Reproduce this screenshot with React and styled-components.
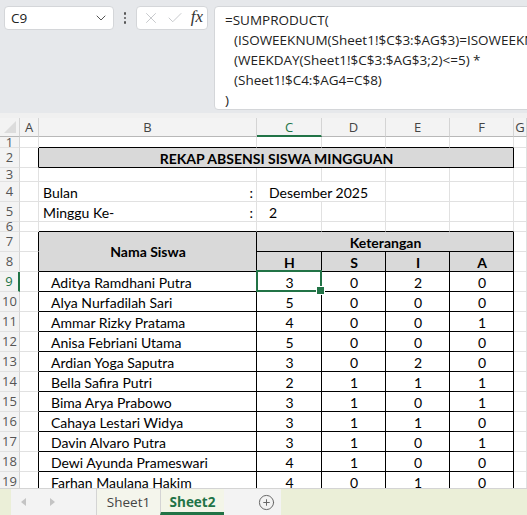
import React from 'react';
import styled, { createGlobalStyle } from 'styled-components';
import { ChevronDown, X, Check, CirclePlus } from 'lucide-react';

const GlobalStyle = createGlobalStyle`
  html, body { margin: 0; padding: 0; overflow: hidden; background: #fff; }
  * { box-sizing: border-box; }
`;

const Page = styled.div`
  width: 527px;
  height: 515px;
  display: flex;
  flex-direction: column;
  overflow: hidden;
`;

const TopBar = styled.div`
  height: 113px;
  flex-shrink: 0;
  background: #e6e8eb;
  display: flex;
  align-items: flex-start;
  padding: 6px 0 0 4px;
  overflow: hidden;
  font-family: "Open Sans", "Noto Sans", sans-serif;
  & > * { flex-shrink: 0; }
`;

const NameBox = styled.div`
  width: 110px;
  height: 24px;
  background: #fff;
  border: 1px solid #d4d6d9;
  border-radius: 4px;
  display: flex;
  align-items: center;
  justify-content: space-between;
  padding: 0 4px 0 6px;
  font-size: 13.5px;
  color: #222;
`;

const Dots = styled.div`
  width: 22px;
  height: 24px;
  display: flex;
  flex-direction: column;
  align-items: center;
  justify-content: center;
  gap: 2px;
  span {
    width: 2.5px;
    height: 2.5px;
    background: #555;
    border-radius: 50%;
  }
`;

const FxBox = styled.div`
  width: 72px;
  height: 24px;
  background: #fff;
  border: 1px solid #d4d6d9;
  border-radius: 4px;
  display: flex;
  align-items: center;
  justify-content: space-between;
  padding: 0 4px 0 5px;
  color: #c2c4c7;
`;

const Fx = styled.span`
  font-family: "Liberation Serif", serif;
  font-style: italic;
  font-size: 17px;
  color: #333;
  padding-bottom: 2px;
`;

const FormulaBox = styled.div`
  margin-left: 6px;
  width: 330px;
  height: 104px;
  background: #fff;
  border: 1px solid #d4d6d9;
  border-radius: 4px;
  padding: 3px 0 0 10px;
  font-size: 13.5px;
  line-height: 20px;
  color: #222;
  white-space: nowrap;
  overflow: hidden;
`;

const FLine = styled.div`
  padding-left: ${p => (p.$indent ? 9 : 0)}px;
`;

const Strip = styled.div`
  height: 5px;
  flex-shrink: 0;
  background: #f0f0f0;
`;

const COLS = '20px 19px 218px 65px 64px 64px 64px 1fr';
const ROWS = '19px 11px 20px 14px 20px 20px 10px repeat(13, 20px)';

const Sheet = styled.div`
  height: 370px;
  flex-shrink: 0;
  overflow: hidden;
  display: grid;
  grid-template-columns: ${COLS};
  grid-template-rows: ${ROWS};
  background: #fff;
  font-family: Lato, "Liberation Sans", sans-serif;
  font-size: 14px;
  color: #000;
`;

const Corner = styled.div`
  background: #f3f3f3;
  border-right: 1px solid #d4d4d4;
  border-bottom: 1px solid #b8b8b8;
  position: relative;
  &::after {
    content: '';
    position: absolute;
    right: 3px;
    bottom: 3px;
    width: 0;
    height: 0;
    border-left: 12px solid transparent;
    border-bottom: 12px solid #dcdcdc;
  }
`;

const ColHead = styled.div`
  background: #f3f3f3;
  border-right: 1px solid #d4d4d4;
  border-bottom: ${p => (p.$active ? '2px solid #217346' : '1px solid #b8b8b8')};
  display: flex;
  align-items: center;
  justify-content: center;
  font-family: "Open Sans", "Noto Sans", sans-serif;
  font-size: 13px;
  color: ${p => (p.$active ? '#217346' : '#444')};
`;

const RowHead = styled.div`
  background: #f3f3f3;
  border-right: ${p => (p.$active ? '2px solid #217346' : '1px solid #d4d4d4')};
  border-bottom: 1px solid #e1e1e1;
  display: flex;
  align-items: center;
  justify-content: center;
  overflow: hidden;
  font-family: "Open Sans", "Noto Sans", sans-serif;
  font-size: 13px;
  line-height: 1;
  color: ${p => (p.$active ? '#217346' : '#555')};
`;

const Cell = styled.div`
  position: relative;
  grid-column: span ${p => p.$cols || 1};
  grid-row: span ${p => p.$rows || 1};
  border-right: 1px solid ${p => (p.$r ? '#000' : '#e1e1e1')};
  border-bottom: 1px solid ${p => (p.$b ? '#000' : '#e1e1e1')};
  background: ${p => p.$fill || '#fff'};
  display: flex;
  align-items: ${p => (p.$mid ? 'center' : 'flex-end')};
  justify-content: ${p => p.$justify || 'flex-start'};
  padding: 0 3px 0 ${p => (p.$indent != null ? p.$indent : 4)}px;
  font-weight: ${p => (p.$bold ? 700 : 400)};
  white-space: nowrap;
  line-height: 16px;
`;

const Selection = styled.div`
  position: absolute;
  z-index: 2;
  top: -2px;
  left: -1px;
  right: -1px;
  bottom: -1px;
  border: 2px solid #217346;
  pointer-events: none;
  &::after {
    content: '';
    position: absolute;
    right: -5px;
    bottom: -5px;
    width: 7px;
    height: 7px;
    background: #217346;
    border: 1px solid #fff;
  }
`;

const TabBar = styled.div`
  height: 27px;
  flex-shrink: 0;
  display: flex;
  background: #ebefd8;
  border-top: 1px solid #d4d4d4;
  font-family: "Open Sans", "Noto Sans", sans-serif;
`;

const NavArea = styled.div`
  margin-left: 11px;
  width: 85px;
  background: #f3f3f3;
  display: flex;
  align-items: center;
  padding-left: 10px;
  gap: 22px;
`;

const Tab = styled.div`
  width: 64px;
  display: flex;
  align-items: center;
  justify-content: center;
  font-size: 13.5px;
  font-weight: ${p => (p.$active ? 700 : 400)};
  color: ${p => (p.$active ? '#217346' : '#444')};
  background: ${p => (p.$active ? '#f3f5e8' : '#f4f5ec')};
  border-left: 1px solid #d4d4d4;
  border-bottom: ${p => (p.$active ? '3px solid #217346' : '0')};
  padding-top: ${p => (p.$active ? '3px' : '0')};
`;

const AddArea = styled.div`
  width: 57px;
  background: #f3f3f3;
  display: flex;
  align-items: center;
  justify-content: flex-end;
  padding-right: 6px;
  color: #666;
`;

const Tri = ({ dir }) => (
  <svg width="6" height="8" viewBox="0 0 6 8">
    <path d={dir === 'left' ? 'M5 0 L0 4 L5 8 Z' : 'M1 0 L6 4 L1 8 Z'} fill="#c4c4c4" />
  </svg>
);

const students = [
  ['Aditya Ramdhani Putra', 3, 0, 2, 0],
  ['Alya Nurfadilah Sari', 5, 0, 0, 0],
  ['Ammar Rizky Pratama', 4, 0, 0, 1],
  ['Anisa Febriani Utama', 5, 0, 0, 0],
  ['Ardian Yoga Saputra', 3, 0, 2, 0],
  ['Bella Safira Putri', 2, 1, 1, 1],
  ['Bima Arya Prabowo', 3, 1, 0, 1],
  ['Cahaya Lestari Widya', 3, 1, 1, 0],
  ['Davin Alvaro Putra', 3, 1, 0, 1],
  ['Dewi Ayunda Prameswari', 4, 1, 0, 0],
  ['Farhan Maulana Hakim', 4, 0, 1, 0],
];

const letters = ['A', 'B', 'C', 'D', 'E', 'F', 'G'];

export default function App() {
  return (
    <Page>
      <GlobalStyle />
      <TopBar>
        <NameBox>
          <span>C9</span>
          <ChevronDown size={16} strokeWidth={1.5} color="#555" />
        </NameBox>
        <Dots>
          <span />
          <span />
          <span />
        </Dots>
        <FxBox>
          <X size={18} strokeWidth={1.2} />
          <Check size={18} strokeWidth={1.2} />
          <Fx>fx</Fx>
        </FxBox>
        <FormulaBox>
          <FLine>=SUMPRODUCT(</FLine>
          <FLine $indent>(ISOWEEKNUM(Sheet1!$C$3:$AG$3)=ISOWEEKNUM(</FLine>
          <FLine $indent>(WEEKDAY(Sheet1!$C$3:$AG$3;2)&lt;=5) *</FLine>
          <FLine $indent>(Sheet1!$C4:$AG4=C$8)</FLine>
          <FLine>)</FLine>
        </FormulaBox>
      </TopBar>
      <Strip />
      <Sheet>
        <Corner />
        {letters.map(l => (
          <ColHead key={l} $active={l === 'C'}>{l}</ColHead>
        ))}

        {/* row 1 */}
        <RowHead>1</RowHead>
        <Cell />
        <Cell $b />
        <Cell $b />
        <Cell $b />
        <Cell $b />
        <Cell $b />
        <Cell />

        {/* row 2 */}
        <RowHead>2</RowHead>
        <Cell $r />
        <Cell $cols={5} $r $b $fill="#d9d9d9" $bold $justify="center">
          REKAP ABSENSI SISWA MINGGUAN
        </Cell>
        <Cell />

        {/* row 3 */}
        <RowHead>3</RowHead>
        {letters.map(l => <Cell key={l} />)}

        {/* row 4 */}
        <RowHead>4</RowHead>
        <Cell />
        <Cell $justify="space-between">
          <span>Bulan</span>
          <span>:</span>
        </Cell>
        <Cell $cols={2} $indent={12}>Desember 2025</Cell>
        <Cell />
        <Cell />
        <Cell />

        {/* row 5 */}
        <RowHead>5</RowHead>
        <Cell />
        <Cell $justify="space-between">
          <span>Minggu Ke-</span>
          <span>:</span>
        </Cell>
        <Cell $indent={12}>2</Cell>
        <Cell />
        <Cell />
        <Cell />
        <Cell />

        {/* row 6 */}
        <RowHead>6</RowHead>
        <Cell />
        <Cell $b />
        <Cell $b />
        <Cell $b />
        <Cell $b />
        <Cell $b />
        <Cell />

        {/* row 7 */}
        <RowHead>7</RowHead>
        <Cell $r />
        <Cell $rows={2} $r $b $fill="#d9d9d9" $bold $mid $justify="center">
          Nama Siswa
        </Cell>
        <Cell $cols={4} $r $b $fill="#d9d9d9" $bold $justify="center">
          Keterangan
        </Cell>
        <Cell />

        {/* row 8 */}
        <RowHead>8</RowHead>
        <Cell $r />
        {['H', 'S', 'I', 'A'].map(h => (
          <Cell key={h} $r $b $fill="#d9d9d9" $bold $justify="center">{h}</Cell>
        ))}
        <Cell />

        {students.map(([name, h, s, i, a], idx) => (
          <React.Fragment key={name}>
            <RowHead $active={idx === 0}>{idx + 9}</RowHead>
            <Cell $r />
            <Cell $r $b $indent={12}>{name}</Cell>
            {[h, s, i, a].map((v, k) => (
              <Cell key={k} $r $b $justify="center">
                {v}
                {idx === 0 && k === 0 && <Selection />}
              </Cell>
            ))}
            <Cell />
          </React.Fragment>
        ))}
      </Sheet>
      <TabBar>
        <NavArea>
          <Tri dir="left" />
          <Tri dir="right" />
        </NavArea>
        <Tab>Sheet1</Tab>
        <Tab $active>Sheet2</Tab>
        <AddArea>
          <CirclePlus size={17} strokeWidth={1.4} />
        </AddArea>
      </TabBar>
    </Page>
  );
}
